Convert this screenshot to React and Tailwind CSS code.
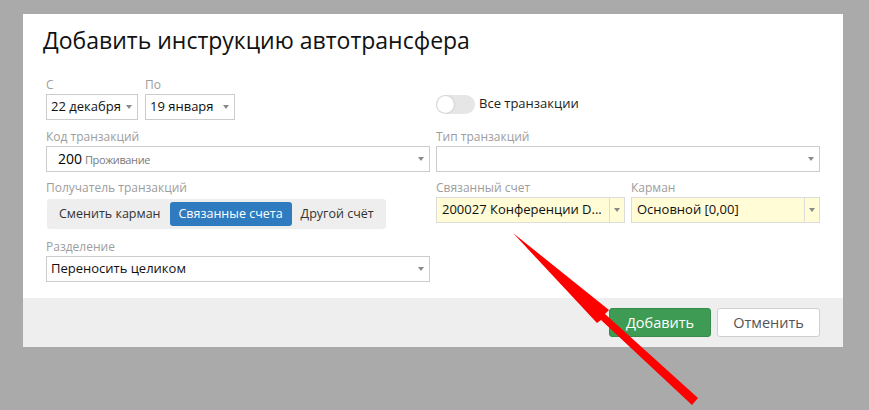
import React from 'react'

const font = { fontFamily: '"Open Sans", "Noto Sans", sans-serif' }

function Caret() {
  return (
    <svg width="6" height="4" viewBox="0 0 6 4" className="shrink-0">
      <path d="M0 0h6L3 4z" fill="#8a8a8a" />
    </svg>
  )
}

function Label({ children }) {
  return <div className="text-[12px] leading-[18px] text-[#9d9d9d] whitespace-nowrap">{children}</div>
}

function Select({ children, className = '' }) {
  return (
    <div className={`h-[26px] border border-[#cccccc] bg-white flex items-center justify-between pl-[4px] pr-[5px] ${className}`}>
      <div className="text-[13px] text-[#111] whitespace-nowrap overflow-hidden">{children}</div>
      <Caret />
    </div>
  )
}

function YellowSelect({ children }) {
  return (
    <div className="h-[26px] border border-[#dcdcdc] bg-[#fffcd6] flex items-stretch">
      <div className="flex-1 min-w-0 flex items-center pl-[5px] text-[13px] text-[#111] whitespace-nowrap overflow-hidden">{children}</div>
      <div className="w-[15px] border-l border-[#dcdcdc] flex items-center justify-center">
        <Caret />
      </div>
    </div>
  )
}

export default function App() {
  return (
    <div className="relative w-full min-h-[410px] bg-[#aaaaaa] pt-[14px] pl-[23px] overflow-hidden" style={font}>
      <div className="w-[820px] bg-white">
        {/* header */}
        <div className="px-[20px] pt-[11px]">
          <h1 className="text-[23px] leading-[30px] text-[#111] font-normal">Добавить инструкцию автотрансфера</h1>
        </div>

        {/* body */}
        <div className="px-[23px] pt-[21px] pb-[16px]">
          <div className="grid grid-cols-2 gap-x-[6px]">
            <div className="flex gap-[7px]">
              <div className="w-[92px]">
                <Label>С</Label>
                <Select>22 декабря</Select>
              </div>
              <div className="w-[90px]">
                <Label>По</Label>
                <Select>19 января</Select>
              </div>
            </div>
            <div className="pt-[18px]">
              <div className="flex items-center gap-[4px] h-[20px]">
                <div className="w-[39px] h-[19px] rounded-full bg-[#e6e6e6] p-[1px]">
                  <div className="w-[17px] h-[17px] rounded-full bg-white shadow-[0_0_2px_rgba(0,0,0,0.25)]" />
                </div>
                <span className="text-[13px] text-[#222]">Все транзакции</span>
              </div>
            </div>
          </div>

          <div className="grid grid-cols-2 gap-x-[6px] mt-[8px]">
            <div>
              <Label>Код транзакций</Label>
              <Select>
                <span className="pl-[7px] text-[14px] text-black">200</span>
                <span className="pl-[3px] text-[11px] tracking-[-0.4px] text-[#7a7a7a]">Проживание</span>
              </Select>
            </div>
            <div>
              <Label>Тип транзакций</Label>
              <Select>{' '}</Select>
            </div>
          </div>

          <div className="grid grid-cols-2 gap-x-[6px] mt-[7px]">
            <div>
              <Label>Получатель транзакций</Label>
              <div className="mt-[2px] inline-flex h-[30px] rounded-[3px] bg-[#eeeeee] p-[3px] ml-[1px]">
                <button className="px-[9px] rounded-[3px] text-[12.5px] text-[#333]">Сменить карман</button>
                <button className="px-[9px] rounded-[3px] text-[12.5px] text-white bg-[#2f7bc0]">Связанные счета</button>
                <button className="px-[9px] rounded-[3px] text-[12.5px] text-[#333]">Другой счёт</button>
              </div>
            </div>
            <div className="grid grid-cols-2 gap-x-[6px]">
              <div>
                <Label>Связанный счет</Label>
                <YellowSelect>200027 Конференции D...</YellowSelect>
              </div>
              <div>
                <Label>Карман</Label>
                <YellowSelect>Основной [0,00]</YellowSelect>
              </div>
            </div>
          </div>

          <div className="grid grid-cols-2 gap-x-[6px] mt-[9px]">
            <div>
              <Label>Разделение</Label>
              <Select>Переносить целиком</Select>
            </div>
          </div>
        </div>

        {/* footer */}
        <div className="h-[49px] bg-[#eeeeee] flex items-center justify-end gap-[6px] px-[23px]">
          <button className="h-[29px] w-[102px] rounded-[3px] bg-[#3e9b54] border border-[#378c4a] text-white text-[14.5px]">Добавить</button>
          <button className="h-[29px] w-[103px] rounded-[3px] bg-white border border-[#cfcfcf] text-[#555] text-[14.5px]">Отменить</button>
        </div>
      </div>

      {/* annotation arrow */}
      <svg className="absolute left-0 top-0 pointer-events-none" width="869" height="410" viewBox="0 0 869 410">
        <polygon points="513,233 609,310 605,314 698,398 692,405 601,320 597,323" fill="#ff0000" />
      </svg>
    </div>
  )
}
